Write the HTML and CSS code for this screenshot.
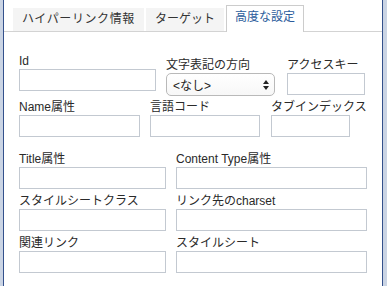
FILE: index.html
```html
<!DOCTYPE html>
<html lang="ja">
<head>
<meta charset="utf-8">
<link rel="stylesheet" href="styles.css">
</head>
<body>
<div class="outer">
  <div class="inner">
    <div class="tabs">
      <div class="tab tab-wide">ハイパーリンク情報</div>
      <div class="tab">ターゲット</div>
      <div class="tab active">高度な設定</div>
    </div>
    <div class="form">
      <div class="row row1">
        <div class="field">
          <label class="lbl">Id</label>
          <input class="inp" type="text">
        </div>
        <div class="field lower">
          <label class="lbl">文字表記の方向</label>
          <div class="select">
            <span>&lt;なし&gt;</span>
            <svg class="arrows" width="6" height="10" viewBox="0 0 6 10"><path d="M3 0 L6 4 L0 4 Z M0 6 L6 6 L3 10 Z" fill="#222"/></svg>
          </div>
        </div>
        <div class="field lower">
          <label class="lbl">アクセスキー</label>
          <input class="inp" type="text">
        </div>
      </div>
      <div class="row row2">
        <div class="field">
          <label class="lbl">Name属性</label>
          <input class="inp" type="text">
        </div>
        <div class="field">
          <label class="lbl">言語コード</label>
          <input class="inp" type="text">
        </div>
        <div class="field">
          <label class="lbl">タブインデックス</label>
          <input class="inp" type="text">
        </div>
      </div>
      <div class="row row3">
        <div class="field">
          <label class="lbl">Title属性</label>
          <input class="inp" type="text">
        </div>
        <div class="field">
          <label class="lbl">Content Type属性</label>
          <input class="inp" type="text">
        </div>
      </div>
      <div class="row row4">
        <div class="field">
          <label class="lbl">スタイルシートクラス</label>
          <input class="inp" type="text">
        </div>
        <div class="field">
          <label class="lbl">リンク先のcharset</label>
          <input class="inp" type="text">
        </div>
      </div>
      <div class="row row4">
        <div class="field">
          <label class="lbl">関連リンク</label>
          <input class="inp" type="text">
        </div>
        <div class="field">
          <label class="lbl">スタイルシート</label>
          <input class="inp" type="text">
        </div>
      </div>
    </div>
  </div>
</div>
</body>
</html>
```

FILE: styles.css
```css
* { box-sizing: border-box; }
html, body { margin: 0; padding: 0; }
body {
  font-family: "Liberation Sans", "Noto Sans CJK JP", sans-serif;
  font-size: 12px;
  color: #333;
  overflow: hidden;
}
.outer {
  height: 286px;
  width: 387px;
  background: #cad4e4;
  padding: 0 4px 0 3px;
}
.inner {
  height: 100%;
  background: #fff;
  border-left: 1px solid #34518c;
  border-right: 1px solid #34518c;
}
.tabs {
  display: flex;
  align-items: flex-end;
  gap: 2px;
  height: 32px;
  padding-left: 9px;
  border-bottom: 1px solid #d3d3d3;
}
.tab {
  height: 23px;
  line-height: 23px;
  padding: 0 8px;
  border: 1px solid #f4f4f4;
  border-bottom: none;
  border-top: none;
  background: #f4f4f4;
  color: #333;
  white-space: nowrap;
}
.tab-wide { letter-spacing: 0.6px; }
.tab.active {
  height: 27px;
  line-height: 23px;
  padding-bottom: 3px;
  margin-bottom: -1px;
  background: #fff;
  border: 1px solid #cccccc;
  border-bottom: none;
  color: #2b5c9c;
}
.form {
  padding: 21px 0 0 15px;
}
.row {
  display: grid;
  align-items: start;
}
.row1 { grid-template-columns: 137px 109px 80px; column-gap: 10px; }
.row1 .field:nth-child(3) { margin-left: 2px; }
.row2 { grid-template-columns: 121px 110px 80px; column-gap: 10px; margin-top: 3px; }
.row2 .field:nth-child(3) { margin-left: 1px; }
.row3 { grid-template-columns: 147px 191px; column-gap: 10px; margin-top: 14px; }
.row4 { grid-template-columns: 147px 191px; column-gap: 10px; margin-top: 4px; }
.field { display: flex; flex-direction: column; min-width: 0; }
.field.lower { margin-top: 4px; }
.lbl {
  display: block;
  height: 16px;
  line-height: 16px;
  white-space: nowrap;
  color: #2a2a2a;
}
.inp {
  display: block;
  width: 100%;
  height: 22px;
  margin: 0;
  border: 1px solid #c3c9d1;
  background: #fff;
  padding: 0 4px;
  font: inherit;
  outline: none;
}
.select {
  display: flex;
  align-items: center;
  justify-content: space-between;
  height: 23px;
  padding: 0 5px 0 6px;
  border: 1px solid #b9b9b9;
  border-radius: 5px;
  background: linear-gradient(#ffffff, #f7f7f7);
  color: #222;
}
.arrows { display: block; }
```
